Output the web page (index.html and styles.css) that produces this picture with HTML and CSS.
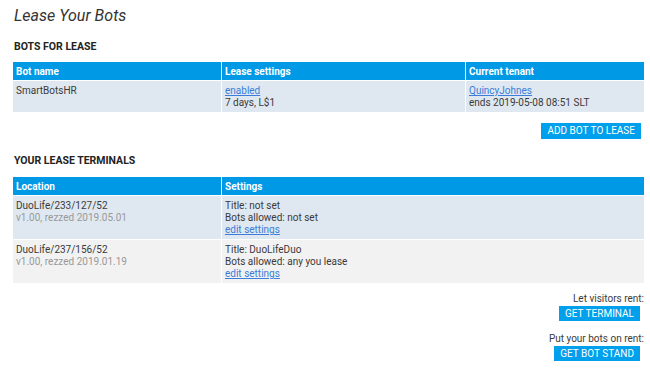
FILE: index.html
```html
<!doctype html>
<html lang="en">
<head>
<meta charset="utf-8">
<meta name="viewport" content="width=device-width, initial-scale=1">
<title>Lease Your Bots</title>
<link rel="stylesheet" href="styles.css">
</head>

<body>
	<div class="lb-pagina">
		<h1 class="lb-titulo">Lease Your Bots</h1>

		<h2 class="lb-secao">BOTS FOR LEASE</h2>
		<table class="lb-tabela">
			<tr>
				<th class="lb-col-nome">Bot name</th>
				<th class="lb-col-config">Lease settings</th>
				<th>Current tenant</th>
			</tr>
			<tr class="lb-linha-azul">
				<td>SmartBotsHR</td>
				<td><a href="#">enabled</a><br>7 days, L$1</td>
				<td><a href="#">QuincyJohnes</a><br>ends 2019-05-08 08:51 SLT</td>
			</tr>
		</table>
		<div class="lb-direita lb-espaco-botao">
			<button class="lb-botao">ADD BOT TO LEASE</button>
		</div>

		<h2 class="lb-secao lb-secao-2">YOUR LEASE TERMINALS</h2>
		<table class="lb-tabela">
			<tr>
				<th class="lb-col-nome">Location</th>
				<th>Settings</th>
			</tr>
			<tr class="lb-linha-azul">
				<td>DuoLife/233/127/52<br><span class="lb-cinza">v1.00, rezzed 2019.05.01</span></td>
				<td>Title: not set<br>Bots allowed: not set<br><a href="#">edit settings</a></td>
			</tr>
			<tr class="lb-linha-cinza">
				<td>DuoLife/237/156/52<br><span class="lb-cinza">v1.00, rezzed 2019.01.19</span></td>
				<td>Title: DuoLifeDuo<br>Bots allowed: any you lease<br><a href="#">edit settings</a></td>
			</tr>
		</table>

		<div class="lb-direita lb-bloco">
			<div class="lb-rotulo">Let visitors rent:</div>
			<button class="lb-botao lb-botao-baixo">GET TERMINAL</button>
		</div>
		<div class="lb-direita lb-bloco">
			<div class="lb-rotulo">Put your bots on rent:</div>
			<button class="lb-botao lb-botao-baixo">GET BOT STAND</button>
		</div>
	</div>
</body>
</html>
```

FILE: styles.css
```css
*
{
	margin: 0;
	padding: 0;
}
body
{
	font-family: Roboto, "Liberation Sans", Arial, sans-serif;
	font-size: 10px;
	color: #3A3A3A;
	background-color: #FFF;
}
.lb-pagina
{
	padding: 5px 6px 0 13px;
}
.lb-titulo
{
	font-size: 16px;
	font-style: italic;
	font-weight: normal;
	color: #333;
	padding-left: 1px;
	line-height: 22px;
}
.lb-secao
{
	font-size: 10.5px;
	font-weight: bold;
	color: #222;
	padding-left: 1px;
	margin-top: 13px;
	margin-bottom: 8px;
	line-height: 14px;
}
.lb-secao-2
{
	margin-top: 15px;
	margin-bottom: 9px;
}
.lb-tabela
{
	width: 100%;
	border-collapse: collapse;
}
.lb-tabela th
{
	background-color: #0099E6;
	color: #FFF;
	text-align: left;
	font-weight: bold;
	height: 18px;
	padding: 0 3px;
	border: 1px solid #FFF;
	border-top: 0;
}
.lb-tabela td
{
	vertical-align: top;
	padding: 4px 3px 3px 3px;
	line-height: 12px;
	border: 1px solid #FFF;
}
.lb-tabela tr > :first-child
{
	border-left: 0;
}
.lb-tabela tr > :last-child
{
	border-right: 0;
}
.lb-col-nome
{
	width: 202px;
}
.lb-col-config
{
	width: 237px;
}
.lb-linha-azul td
{
	background-color: #DFE8F1;
}
.lb-linha-cinza td
{
	background-color: #F2F2F2;
}
.lb-tabela a
{
	color: #3B7DD8;
}
.lb-cinza
{
	color: #999;
}
.lb-direita
{
	display: flex;
	flex-direction: column;
	align-items: flex-end;
}
.lb-espaco-botao
{
	margin-top: 10px;
	padding-right: 3px;
}
.lb-botao
{
	background-color: #00A0EC;
	color: #FFF;
	border: none;
	font-family: Roboto, "Liberation Sans", Arial, sans-serif;
	font-size: 10px;
	height: 16px;
	padding: 0 6px;
	line-height: 16px;
}
.lb-botao-baixo
{
	height: 15px;
	line-height: 15px;
	margin-right: 4px;
}
.lb-bloco
{
	margin-top: 9px;
}
.lb-bloco + .lb-bloco
{
	margin-top: 12px;
}
.lb-rotulo
{
	line-height: 12px;
	margin-bottom: 1px;
}
```
